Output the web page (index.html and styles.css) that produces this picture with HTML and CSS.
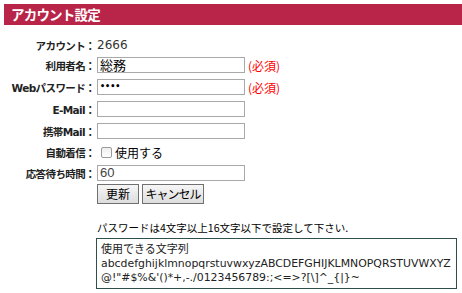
FILE: index.html
```html
<!DOCTYPE html>
<html lang="ja">
<head>
<meta charset="utf-8">
<link rel="stylesheet" href="styles.css">
</head>
<body>
<h1 class="title">アカウント設定</h1>
<div class="form">
  <div class="row r1"><span class="label">アカウント：</span><span class="value">2666</span></div>
  <div class="row"><span class="label">利用者名：</span><span class="value"><span class="input">総務</span><span class="req">(必須)</span></span></div>
  <div class="row"><span class="label">Webパスワード：</span><span class="value"><span class="input pw">••••</span><span class="req">(必須)</span></span></div>
  <div class="row"><span class="label">E-Mail：</span><span class="value"><span class="input"></span></span></div>
  <div class="row"><span class="label">携帯Mail：</span><span class="value"><span class="input"></span></span></div>
  <div class="row r6"><span class="label">自動着信：</span><span class="value"><span class="check"></span><span class="checktext">使用する</span></span></div>
  <div class="row"><span class="label">応答待ち時間：</span><span class="value"><span class="input num">60</span></span></div>
  <div class="row r8"><span class="label"></span><span class="value"><span class="btn b1">更新</span><span class="btn b2">キャンセル</span></span></div>
</div>
<p class="note">パスワードは4文字以上16文字以下で設定して下さい.</p>
<div class="box">
  <div class="boxhead">使用できる文字列</div>
  <div class="chars">abcdefghijklmnopqrstuvwxyzABCDEFGHIJKLMNOPQRSTUVWXYZ<br>@!"#$%&amp;'()*+,-./0123456789:;&lt;=&gt;?[\]^_{|}~</div>
</div>
</body>
</html>
```
FILE: styles.css
```css
html, body { margin: 0; padding: 0; background: #fff; }
body {
  font-family: "DejaVu Sans", "Noto Sans CJK JP", sans-serif;
  font-size: 12px;
  color: #333;
}
.title {
  margin: 4px 0 0 4px;
  height: 21px;
  line-height: 21px;
  background: #b82548;
  color: #fff;
  font-family: "Noto Sans CJK JP", sans-serif;
  font-size: 13.5px;
  font-weight: bold;
  letter-spacing: -0.8px;
  padding-left: 7px;
}
.form { margin-top: 11px; display: flex; flex-direction: column; }
.row { display: flex; align-items: center; height: 22px; }
.row.r1 { height: 18px; }
.row.r6 { height: 20px; }
.row.r8 { height: 20px; }
.label {
  width: 95px;
  text-align: right;
  font-weight: bold;
  font-size: 10.5px;
  font-family: "DejaVu Sans", "Noto Sans CJK JP", sans-serif;
  color: #222;
  letter-spacing: -0.6px;
}
.value { display: flex; align-items: center; padding-left: 2px; font-size: 12px; }
.input {
  box-sizing: border-box;
  width: 148px;
  height: 16px;
  border: 1px solid #a9a9a9;
  background: #fff;
  font-family: "Noto Sans CJK JP", sans-serif;
  font-size: 13px;
  line-height: 14px;
  color: #000;
  padding-left: 2px;
}
.input.pw { font-family: "DejaVu Sans", sans-serif; font-size: 8px; font-weight: bold; line-height: 14px; }
.input.num { font-family: "Liberation Sans", sans-serif; font-size: 13px; color: #444; }
.req {
  color: #f00;
  margin-left: 3px;
  font-family: "Noto Sans CJK JP", sans-serif;
  font-size: 12px;
}
.check {
  box-sizing: border-box;
  width: 11px; height: 11px;
  border: 1px solid #9a9a9a;
  border-radius: 2px;
  background: linear-gradient(#eee, #fff);
  margin-left: 4px;
}
.checktext { margin-left: 3px; font-family: "Noto Sans CJK JP", sans-serif; font-size: 12px; color: #000; }
.btn {
  box-sizing: border-box;
  height: 20px;
  line-height: 18px;
  border: 1px solid #707070;
  background: linear-gradient(#f6f6f6, #dddddd);
  text-align: center;
  margin-right: 3px;
  font-family: "Noto Sans CJK JP", sans-serif;
  font-size: 12px;
  color: #000;
}
.b1 { width: 42px; }
.b2 { width: 62px; letter-spacing: -1px; }
.note {
  margin: 17px 0 0 97px;
  font-family: "Noto Sans CJK JP", sans-serif;
  font-size: 10.5px;
  line-height: 14px;
  color: #000;
}
.box {
  margin: 3px 0 0 96px;
  width: 361px;
  box-sizing: border-box;
  border: 1px solid #2f4f4f;
  padding: 2px 4px 3px;
  font-size: 11px;
  color: #222;
}
.boxhead { font-family: "Noto Sans CJK JP", sans-serif; line-height: 15px; }
.chars { margin-top: 1px; line-height: 14px; font-family: "DejaVu Sans", sans-serif; font-size: 10.9px; }
```
